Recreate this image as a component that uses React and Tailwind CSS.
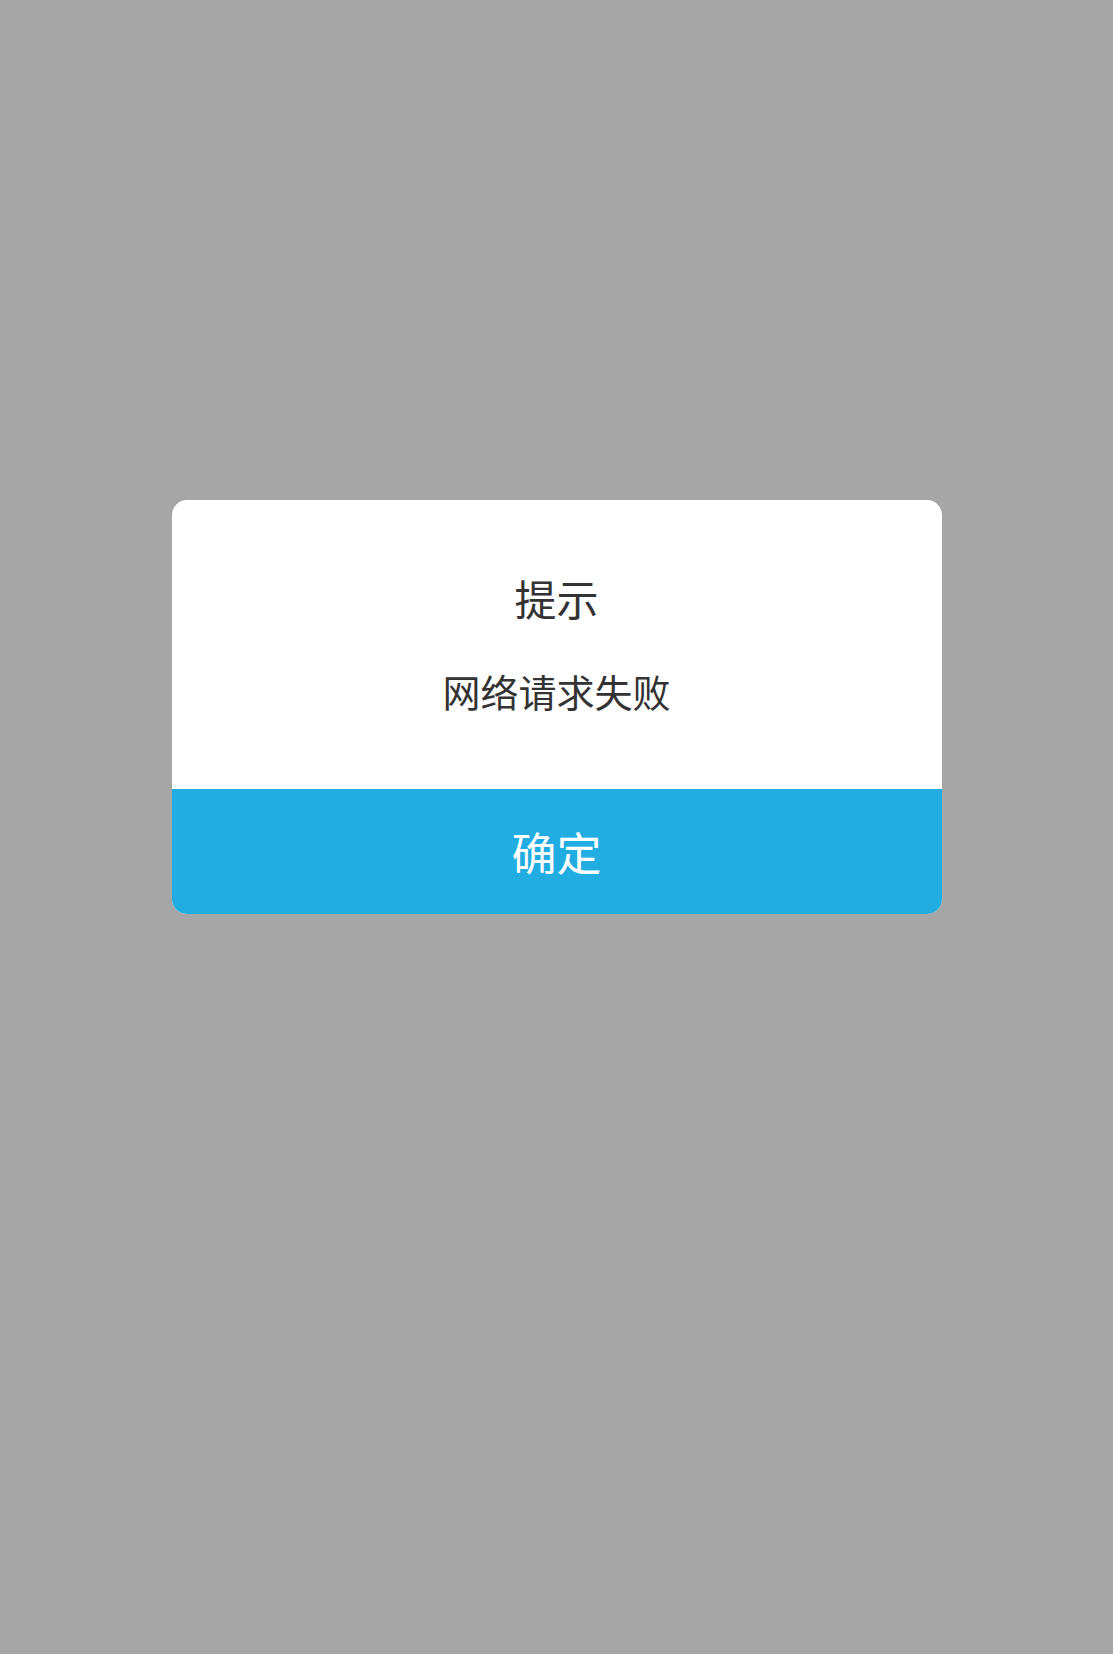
import React from 'react';

function AlertDialog({ title, message, confirmText }) {
  return (
    <div className="mx-auto w-[770px] overflow-hidden rounded-[15px] bg-white">
      <div className="flex h-[289px] flex-col items-center pt-[76px] text-[#333333]">
        <div className="text-[42px] leading-[44px]">{title}</div>
        <div className="mt-[51px] text-[38px] leading-[40px]">{message}</div>
      </div>
      <button className="flex h-[125px] w-full items-center justify-center bg-[#21ade2] text-[45px] text-white">
        {confirmText}
      </button>
    </div>
  );
}

export default function App() {
  return (
    <div
      className="min-h-[1654px] w-full bg-[#a6a6a6] pt-[500px]"
      style={{ fontFamily: '"Noto Sans CJK SC", "Noto Sans", sans-serif' }}
    >
      <AlertDialog title="提示" message="网络请求失败" confirmText="确定" />
    </div>
  );
}
